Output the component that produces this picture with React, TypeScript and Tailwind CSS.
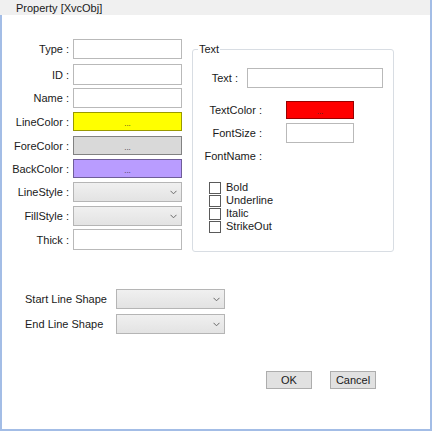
import React from "react";

const font = { fontFamily: '"Liberation Sans", Arial, sans-serif' };

function Chevron() {
  return (
    <svg width="7" height="5" viewBox="0 0 7 5" className="mr-[4px]">
      <path d="M0.5 0.8 L3.5 3.8 L6.5 0.8" fill="none" stroke="#6a6a6a" strokeWidth="1" />
    </svg>
  );
}

function Combo({ w }: { w: string }) {
  return (
    <div
      className={`${w} h-full border border-[#b5b5b5] bg-gradient-to-b from-[#f0f0f0] to-[#e3e3e3] flex items-center justify-end`}
    >
      <Chevron />
    </div>
  );
}

function ColorBtn({ bg, w = "w-[109px]" }: { bg: string; w?: string }) {
  return (
    <div className={`${w} h-full border border-black/40 ${bg} flex items-end justify-center pb-[3px]`}>
      <span className="text-[8px] leading-[6px] text-[#333]">...</span>
    </div>
  );
}

function Input({ w = "w-[109px]" }: { w?: string }) {
  return <div className={`${w} h-full border border-[#b9b9b9] bg-white`} />;
}

type Row = { label: string; h: string; mt: string; kind: "input" | "color" | "combo"; bg?: string };

const rows: Row[] = [
  { label: "Type :", h: "h-[20px]", mt: "mt-0", kind: "input" },
  { label: "ID :", h: "h-[21px]", mt: "mt-[5px]", kind: "input" },
  { label: "Name :", h: "h-[20px]", mt: "mt-[3px]", kind: "input" },
  { label: "LineColor :", h: "h-[19px]", mt: "mt-[4px]", kind: "color", bg: "bg-[#ffff00]" },
  { label: "ForeColor :", h: "h-[19px]", mt: "mt-[5px]", kind: "color", bg: "bg-[#d9d9d9]" },
  { label: "BackColor :", h: "h-[19px]", mt: "mt-[4px]", kind: "color", bg: "bg-[#b99cff]" },
  { label: "LineStyle :", h: "h-[20px]", mt: "mt-[4px]", kind: "combo" },
  { label: "FillStyle :", h: "h-[20px]", mt: "mt-[4px]", kind: "combo" },
  { label: "Thick :", h: "h-[21px]", mt: "mt-[3px]", kind: "input" },
];

function Check({ label }: { label: string }) {
  return (
    <div className="h-[13px] flex items-center pl-[16px]">
      <div className="w-[12px] h-[12px] border border-[#5a5a5a] bg-white" />
      <span className="ml-[5px] text-[11px] leading-[13px] text-[#1a1a1a]">{label}</span>
    </div>
  );
}

export default function App() {
  return (
    <div className="w-[432px] h-[431px] flex flex-col bg-white text-[#1a1a1a]" style={font}>
      <div className="h-[15px] bg-[#f0f0f0] border-r-2 border-[#a3bde6] pl-[16px] text-[11px] leading-[17px]">
        Property [XvcObj]
      </div>
      <div className="flex-1 flex flex-col border-l-2 border-r-2 border-b-2 border-[#a3bde6] bg-white">
        <div className="flex items-start">
          <div className="flex flex-col mt-[24px]">
            {rows.map((r) => (
              <div key={r.label} className={`flex items-center ${r.h} ${r.mt}`}>
                <div className="w-[67px] text-right text-[11px] leading-[14px]">{r.label}</div>
                <div className="ml-[4px] h-full flex">
                  {r.kind === "input" && <Input />}
                  {r.kind === "color" && <ColorBtn bg={r.bg!} />}
                  {r.kind === "combo" && <Combo w="w-[109px]" />}
                </div>
              </div>
            ))}
          </div>
          <div className="relative ml-[10px] mt-[34px] w-[202px] h-[203px] border border-[#d8dde3] rounded-[3px] flex flex-col">
            <div className="absolute left-[5px] top-[-8px] bg-white px-[1px] text-[11px] leading-[14px]">Text</div>
            <div className="flex items-center h-[20px] mt-[18px]">
              <div className="w-[45px] text-right text-[11px] leading-[14px]">Text :</div>
              <div className="ml-[9px] h-full flex">
                <Input w="w-[136px]" />
              </div>
            </div>
            <div className="flex items-center h-[18px] mt-[13px]">
              <div className="w-[69px] text-right text-[11px] leading-[14px]">TextColor :</div>
              <div className="ml-[24px] h-full flex">
                <ColorBtn bg="bg-[#ff0000]" w="w-[68px]" />
              </div>
            </div>
            <div className="flex items-center h-[20px] mt-[4px]">
              <div className="w-[69px] text-right text-[11px] leading-[14px]">FontSize :</div>
              <div className="ml-[24px] h-full flex">
                <Input w="w-[68px]" />
              </div>
            </div>
            <div className="flex items-center h-[14px] mt-[6px]">
              <div className="w-[69px] text-right text-[11px] leading-[14px]">FontName :</div>
            </div>
            <div className="flex flex-col mt-[18px]">
              <Check label="Bold" />
              <Check label="Underline" />
              <Check label="Italic" />
              <Check label="StrikeOut" />
            </div>
          </div>
        </div>
        <div className="flex flex-col mt-[37px] pl-[23px]">
          <div className="flex items-center h-[20px]">
            <div className="w-[91px] text-[11px] leading-[14px]">Start Line Shape</div>
            <div className="h-full flex">
              <Combo w="w-[109px]" />
            </div>
          </div>
          <div className="flex items-center h-[20px] mt-[5px]">
            <div className="w-[91px] text-[11px] leading-[14px]">End Line Shape</div>
            <div className="h-full flex">
              <Combo w="w-[109px]" />
            </div>
          </div>
        </div>
        <div className="flex mt-[37px] pl-[264px] gap-[18px]">
          <div className="w-[46px] h-[18px] border border-[#adadad] bg-[#e1e1e1] flex items-center justify-center text-[11px]">
            OK
          </div>
          <div className="w-[46px] h-[18px] border border-[#adadad] bg-[#e1e1e1] flex items-center justify-center text-[11px]">
            Cancel
          </div>
        </div>
      </div>
    </div>
  );
}
